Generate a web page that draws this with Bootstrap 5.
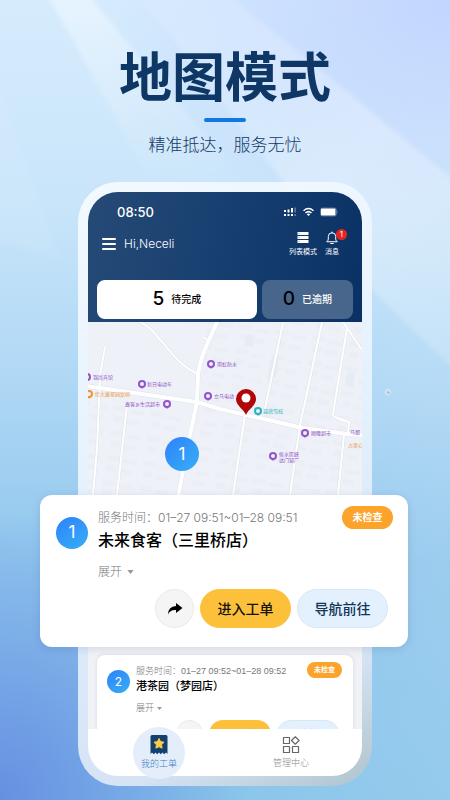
<!DOCTYPE html>
<html lang="zh-CN">
<head>
<meta charset="utf-8">
<meta name="viewport" content="width=device-width, initial-scale=1">
<title>地图模式</title>
<link href="https://cdn.jsdelivr.net/npm/bootstrap@5.3.0/dist/css/bootstrap.min.css" rel="stylesheet">
<style>
  body { font-family: Inter, "Noto Sans CJK SC", sans-serif; color: #111; }
  .promo { min-height: 100vh; padding: 42px 78px 14px; isolation: isolate;
    background:
      radial-gradient(ellipse 55% 36% at 0% 100%, #668fe2 0%, rgba(102,143,226,.6) 40%, rgba(102,143,226,0) 100%),
      radial-gradient(ellipse 80% 32% at 100% 0%, #c2d5ff 0%, rgba(194,213,255,0) 100%),
      linear-gradient(100deg, rgba(110,180,232,0) 0%, rgba(255,255,255,0) 50%, rgba(255,255,255,.12) 100%),
      linear-gradient(180deg, #d6ecfd 0%, #c9e5fa 25%, #b0d8f5 47%, #91c7ed 70%, #86c4ea 100%); }
  .rays { inset: 0; width: 100%; height: 100%; z-index: -1; }
  .headline { font-size: 53px; line-height: 72px; font-weight: 700; color: #0e3766; white-space: nowrap; }
  .rule { width: 42px; height: 4px; background: #1377e0; margin-top: 4px; }
  .tagline { font-size: 17px; line-height: 26px; font-weight: 300; color: #153a66; margin-top: 10px; white-space: nowrap; }
  .phone { margin-top: 24px; padding: 10px; border-radius: 40px;
    background: linear-gradient(150deg, rgba(245,250,255,.95) 0%, rgba(232,243,254,.92) 50%, rgba(218,230,246,.95) 82%, #b5c9d4 97%); }
  .top-area { border-radius: 30px 30px 0 0; background: linear-gradient(100deg, #264a76, #163f70 50%, #0a3163); padding: 11px 9px 3px; color: #fff; }
  .statusbar { height: 18px; padding: 0 14px 0 20px; }
  .clock { font-size: 13px; font-weight: 500; line-height: 18px; }
  .greet { height: 44px; margin-top: 1px; padding: 0 6px 0 5px; }
  .plain-btn { background: none; border: 0; padding: 0; color: inherit; display: flex; }
  .hello { font-size: 12px; font-weight: 300; margin-left: 8px; }
  .tool { flex-direction: column; align-items: center; font-size: 7px; line-height: 10px; font-weight: 400; position: relative; gap: 2px; }
  .count-dot { position: absolute; left: 11px; top: -2px; width: 11px; height: 11px; border-radius: 50%; background: #e5261f; font-size: 8px; line-height: 11px; }
  .tabs { margin-top: 14px; gap: 5px; }
  .stat { height: 39px; border: 0; border-radius: 8px; background: #fff; color: #000; font-size: 10px; font-weight: 500; gap: 7px; padding: 0; }
  .stat-wide { flex: 7 1 0; }
  .stat-dim { flex: 4 1 0; background: #48668c; color: #fff; }
  .stat b { font-size: 19px; font-weight: 500; color: #000; }
  .map { height: 173px; background: #eff1f8; }
  .map svg { width: 100%; height: 100%; display: block; }
  .order { background: #fff; }
  .order-main { margin: 0 -46px 0 -48px; border-radius: 12px; padding: 11px 15px 19px 16px; box-shadow: 0 2px 8px rgba(30,60,100,.14); position: relative; }
  .num { border-radius: 50%; background: linear-gradient(145deg, #2e82fb, #36aff6); color: #fff; flex: none; }
  .order-main .num { width: 32px; height: 32px; margin: 11px 10px 0 0; font-size: 17px; }
  .when { color: #777; font-weight: 300; white-space: nowrap; }
  .order-main .when { font-size: 12px; line-height: 24px; }
  .order-main .shop { font-size: 16px; line-height: 20px; }
  .shop { font-weight: 500; color: #000; margin: 0; white-space: nowrap; }
  .more { color: #777; font-weight: 300; align-items: center; }
  .order-main .more { font-size: 12px; line-height: 16px; margin-top: 14px; gap: 5px; }
  .flag { background: #fba32b; color: #fff; font-weight: 700; border-radius: 20px; flex: none; }
  .order-main .flag { width: 51px; height: 23px; font-size: 10px; }
  .order-main .acts { gap: 6px; padding-right: 5px; margin-top: 9px; }
  .act { border: 1px solid #d9e7f5; border-radius: 40px; background: #e3f0fd; color: #123456; padding: 0; font-weight: 500; flex: none; }
  .order-main .act { width: 91px; height: 39px; font-size: 14px; }
  .order-main .act-go, .order-next .act-go { background: #fdc03a; border-color: #fdc03a; color: #15130c; }
  .act-share { background: #f5f5f5; border-color: #eaeaea; color: #000; }
  .order-main .act-share { width: 39px; }
  .queue { background: #f1f2f6; height: 82px; padding: 8px 9px 0; overflow: hidden; }
  .order-next { border-radius: 8px; padding: 7px 11px 8px 10px; box-shadow: 0 0 4px rgba(40,50,80,.12); }
  .order-next .num { width: 23px; height: 23px; margin: 8px 6px 0 0; font-size: 12px; }
  .order-next .when { font-family: "Liberation Sans", "Noto Sans CJK SC", sans-serif; font-size: 9px; line-height: 18px; }
  .order-next .shop { font-size: 11px; line-height: 13px; }
  .order-next .more { font-size: 9px; line-height: 12px; margin-top: 9px; gap: 3px; }
  .order-next .flag { width: 35px; height: 16px; font-size: 7px; }
  .order-next .acts { gap: 6px; padding-right: 3px; margin-top: 6px; }
  .order-next .act { width: 62px; height: 27px; font-size: 9px; }
  .order-next .act-share { width: 27px; }
  .tabbar { height: 47px; background: #fff; border-radius: 0 0 30px 30px; padding: 0 5px; position: relative; }
  .tab { color: #8b8b8b; font-size: 9px; line-height: 14px; font-weight: 300; text-decoration: none; flex: 1 1 0; gap: 2px; }
  .tab-on { color: #3e7fc4; }
  .halo { width: 52px; height: 52px; border-radius: 50%; background: #e4eefb; gap: 2px; }
</style>
<script src="https://cdn.jsdelivr.net/npm/bootstrap@5.3.0/dist/js/bootstrap.bundle.min.js"></script>
</head>
<body>
<main class="promo position-relative overflow-hidden">
  <svg class="rays position-absolute" viewBox="0 0 450 800" preserveAspectRatio="none" aria-hidden="true">
    <defs>
      <linearGradient id="ray" x1="0" y1="0" x2="0" y2="1"><stop offset="0" stop-color="#fff" stop-opacity=".4"/><stop offset="1" stop-color="#fff" stop-opacity="0"/></linearGradient>
      <linearGradient id="ray2" x1="0" y1="0" x2="1" y2="1"><stop offset="0" stop-color="#fff" stop-opacity=".08"/><stop offset=".55" stop-color="#fff" stop-opacity=".3"/><stop offset="1" stop-color="#fff" stop-opacity=".15"/></linearGradient>
      <filter id="soft"><feGaussianBlur stdDeviation="2"/></filter>
    </defs>
    <g filter="url(#soft)">
      <path d="M48-5H88L250 190H155Z" fill="url(#ray)"/>
      <path d="M138-5H228L300 53 460 185V375L372 290 290 190Z" fill="url(#ray2)"/>
      <path d="M-5 80 34 185 60 260-5 240Z" fill="#fff" opacity=".06"/>
    </g>
    <g fill="none" stroke="#e8eef8"><circle cx="388" cy="392" r="2.500"/><path d="M387 393h3" stroke="#9eb1cc"/></g>
  </svg>

  <header class="d-flex flex-column align-items-center">
    <h1 class="headline m-0">地图模式</h1>
    <div class="rule rounded-pill"></div>
    <p class="tagline mb-0">精准抵达，服务无忧</p>
  </header>

  <section class="phone">
    <div class="top-area">
      <div class="statusbar d-flex align-items-center justify-content-between">
        <span class="clock">08:50</span>
        <svg width="56" height="12" viewBox="0 0 56 12" fill="#fff" aria-hidden="true">
          <path d="M1 4h2v2H1zM4.500 3.500h2v3h-2zM8 2h2v4.500H8zM1 8h2v2H1zM4.500 8h2v2h-2zM8 8h2v2H8z"/><path d="M11.500 1.500h1.200v5h-1.200zM11.500 8h1.200v2h-1.200z" opacity=".45"/>
          <g fill="none" stroke="#fff" stroke-width="1.500"><path d="M20.500 4.700Q25.500.3 30.500 4.700M22.500 7Q25.500 4.300 28.500 7"/></g><path d="M23.800 8.300q1.700-1.500 3.400 0L25.500 10z"/>
          <rect x="37.500" y="2" width="16" height="8" rx="2" fill="none" stroke="#8499b3" stroke-width=".6"/><rect x="38" y="2.500" width="14.500" height="7" rx="1"/><path d="M54.500 4.500v3q1-1.500 0-3" opacity=".6"/>
        </svg>
      </div>
      <div class="greet d-flex align-items-center">
        <button class="plain-btn" aria-label="菜单"><svg width="14" height="14" viewBox="0 0 14 14" stroke="#fff" stroke-width="2" stroke-linecap="round"><path d="M1 2h12M1 7h12M1 12h12"/></svg></button>
        <span class="hello">Hi,Neceli</span>
        <div class="d-flex ms-auto me-2">
          <button class="plain-btn tool me-2"><svg width="14" height="14" viewBox="0 0 14 14" fill="#fff"><path d="M1.500 1h11v3h-11zM1.500 5h11v3h-11zM1.500 9h11v3h-11z"/><path d="M2.500 2.500h1M2.500 6.500h1M2.500 10.500h1" stroke="#4d6b91" stroke-width=".7"/></svg>列表模式</button>
          <button class="plain-btn tool"><svg width="14" height="14" viewBox="0 0 14 14" fill="none" stroke="#fff" stroke-linecap="round" stroke-linejoin="round"><path d="M2 10.500q1.300-1 1.300-2.500V5.500a3.700 3.700 0 0 1 7.400 0V8q0 1.500 1.300 2.500ZM7 1v.8M5.700 12.500h2.600"/></svg>消息<span class="count-dot">1</span></button>
        </div>
      </div>
      <div class="tabs d-flex">
        <button class="stat stat-wide d-flex align-items-center justify-content-center"><b>5</b>待完成</button>
        <button class="stat stat-dim d-flex align-items-center justify-content-center"><b>0</b>已逾期</button>
      </div>
    </div>

    <div class="map">
      <svg viewBox="0 0 274 173" preserveAspectRatio="xMidYMid slice" font-size="5" role="img" aria-label="地图">
        <defs>
          <linearGradient id="dot" x1="0" y1="0" x2="1" y2="1"><stop offset="0" stop-color="#2e82fb"/><stop offset="1" stop-color="#36aff6"/></linearGradient>
          <g id="poi"><path d="M-1.800 2.500h3.600L0 5Z"/><circle r="4"/><circle r="2" fill="#f3ecfb"/></g>
          <pattern id="blocks" width="37" height="25" patternUnits="userSpaceOnUse" patternTransform="rotate(9)"><path d="M2 3h13v5H2zM19 5h14v4H19zM4 13h9v6H4zM17 15h12v5H17z" fill="#e8ebf1" opacity=".5"/></pattern>
          <path id="roads" d="M52 0C72 8 82 41 111 52M115 15 120 18M17 25 12 53 9 127 5 173M39 83 29 173M195 0 177 87M157 93 145 173M234 0 220 66 212 103 202 173M255 0 274 28M259 6 245 92 Q244 95 261 100L260 111M256 113 250 173"/>
          <path id="avenues" d="M-2 64 109 80 132 87 189 100 215 106 259 112 276 113M130-2C120 20 112 35 110 53L109 80 102 113 90 175"/>
        </defs>
        <rect width="274" height="173" fill="#eff1f8"/>
        <path d="M120 0H274V173H100L112 80ZM0 78 100 88 85 173H0Z" fill="url(#blocks)"/>
        <path d="M182 38l9-3-3 20-9 3zM158 12l8 1-1 12-9-1zM260 50l7 1-2 15-8-2z" fill="#e3ebf3" opacity=".8"/>
        <g fill="none" stroke-linejoin="round">
          <use href="#roads" stroke="#dfe2e9" stroke-width="3"/><use href="#avenues" stroke="#dfe2e9" stroke-width="5"/>
          <use href="#roads" stroke="#fff" stroke-width="2"/><use href="#avenues" stroke="#fff" stroke-width="4"/>
        </g>
        <g fill="#8f55c9">
          <use href="#poi" x="-1" y="55"/><text x="5" y="57">锦尚宾馆</text>
          <use href="#poi" x="54" y="62"/><text x="59" y="64">新日电动车</text>
          <use href="#poi" x="123" y="42"/><text x="129" y="44">雨虹防水</text>
          <use href="#poi" x="120" y="74"/><text x="126" y="76">立马电动</text>
          <use href="#poi" x="79" y="82"/><text x="37" y="84">嘉客乡生活超市</text>
          <use href="#poi" x="217" y="111"/><text x="223" y="113">顺隆超市</text>
          <use href="#poi" x="185" y="134"/><text x="191" y="134">侯水区峰</text><text x="191" y="140">达门窗厂</text>
          <text x="262" y="112">马都</text>
        </g>
        <g fill="#ee953d"><use href="#poi" x="1" y="72"/><text x="7" y="74">伦大嘉翠园案例</text><text x="260" y="125">占里心</text></g>
        <g fill="#25b3bd"><use href="#poi" x="170" y="89"/><text x="175" y="91">迎燕驾校</text></g>
        <path d="M158 93C156 87 148 84 148 77a10 10 0 0 1 20 0c0 7-8 10-10 16Z" fill="#b00509"/><circle cx="158" cy="76" r="4.500" fill="#fff"/>
        <circle cx="94" cy="132" r="17" fill="url(#dot)"/><text x="94" y="138" font-size="17" text-anchor="middle" fill="#fff">1</text>
      </svg>
    </div>

    <article class="order order-main">
      <div class="d-flex align-items-start">
        <span class="num d-flex align-items-center justify-content-center">1</span>
        <div class="flex-grow-1">
          <div class="when">服务时间：01–27 09:51~01–28 09:51</div>
          <h2 class="shop">未来食客（三里桥店）</h2>
          <button class="plain-btn more">展开<svg width="7" height="4" viewBox="0 0 8 5" fill="#999"><path d="M0 0h8L4 5Z"/></svg></button>
        </div>
        <span class="flag d-flex align-items-center justify-content-center">未检查</span>
      </div>
      <div class="acts d-flex justify-content-end">
        <button class="act act-share d-flex align-items-center justify-content-center" aria-label="分享"><svg width="16" height="14" viewBox="0 0 16 14"><path d="M9 1 15.500 6 9 11V8Q3 7.500 1 12.500 1 4.500 9 4Z" fill="#000"/></svg></button>
        <button class="act act-go">进入工单</button>
        <button class="act">导航前往</button>
      </div>
    </article>

    <div class="queue">
      <article class="order order-next">
        <div class="d-flex align-items-start">
          <span class="num d-flex align-items-center justify-content-center">2</span>
          <div class="flex-grow-1">
            <div class="when">服务时间：01–27 09:52~01–28 09:52</div>
            <h2 class="shop">港茶园（梦园店）</h2>
            <button class="plain-btn more">展开<svg width="5" height="3" viewBox="0 0 8 5" fill="#999"><path d="M0 0h8L4 5Z"/></svg></button>
          </div>
          <span class="flag d-flex align-items-center justify-content-center">未检查</span>
        </div>
        <div class="acts d-flex justify-content-end">
          <button class="act act-share d-flex align-items-center justify-content-center" aria-label="分享"><svg width="11" height="10" viewBox="0 0 16 14"><path d="M9 1 15.500 6 9 11V8Q3 7.500 1 12.500 1 4.500 9 4Z" fill="#000"/></svg></button>
          <button class="act act-go">进入工单</button>
          <button class="act">导航前往</button>
        </div>
      </article>
    </div>

    <nav class="tabbar d-flex align-items-center">
      <a href="#orders" class="tab tab-on d-flex justify-content-center"><span class="halo d-flex flex-column align-items-center justify-content-center">
        <svg width="18" height="20" viewBox="0 0 18 20"><path d="M2 0h14q1.500 0 1.500 1.500V19l-1.500-1.500-1.800 1.800-1.700-1.800-1.700 1.800L9 17.500l-1.800 1.800-1.700-1.800-1.700 1.800L2 17.500.5 19V1.500Q.5 0 2 0Z" fill="#12406f"/><path d="m9 3.500 1.600 3.100 3.400.6-2.400 2.500.5 3.500L9 11.700l-3.100 1.500.5-3.500L4 7.200l3.400-.6Z" fill="#ffc847" stroke="#ffc847" stroke-linejoin="round"/></svg>我的工单</span></a>
      <a href="#manage" class="tab d-flex flex-column align-items-center justify-content-center">
        <svg width="18" height="18" viewBox="0 0 18 18" fill="none" stroke="#666" stroke-width="1.200" stroke-linejoin="round"><path d="M1.500 1.500h6v6h-6zM1.500 10.500h6v6h-6zM10.500 10.500h6v6h-6zM13.300.8l3.800 3.700-3.800 3.700-3.800-3.700Z"/></svg>管理中心</a>
    </nav>
  </section>
</main>
</body>
</html>
